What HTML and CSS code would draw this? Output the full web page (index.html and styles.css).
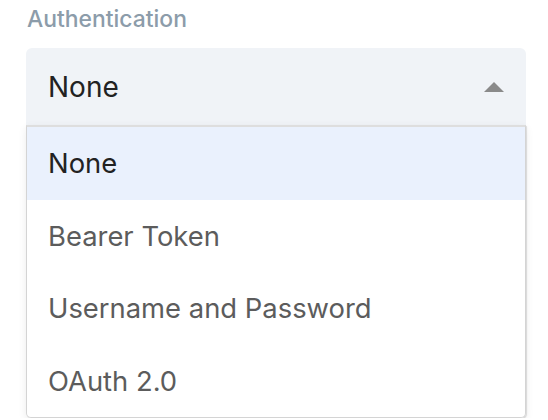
FILE: index.html
```html
<!DOCTYPE html>
<html>
<head>
<meta charset="utf-8">
<link rel="stylesheet" href="styles.css">
</head>
<body>
<div class="field">
  <div class="label">Authentication</div>
  <div class="select">
    <span class="value">None</span>
    <span class="caret"></span>
  </div>
  <ul class="menu">
    <li class="option selected">None</li>
    <li class="option">Bearer Token</li>
    <li class="option">Username and Password</li>
    <li class="option">OAuth 2.0</li>
  </ul>
</div>
</body>
</html>
```
FILE: styles.css
```css
html, body {
  margin: 0;
  padding: 0;
  background: #ffffff;
  font-family: Inter, "Liberation Sans", sans-serif;
}

.field {
  width: 500px;
  padding: 0 0 0 26px;
}

.label {
  font-size: 22.9px;
  font-weight: 500;
  line-height: 26px;
  padding-top: 6px;
  height: 42px;
  color: #8c9caa;
  padding-left: 1px;
}

.select {
  height: 77px;
  background: #f0f3f7;
  border-radius: 6px 6px 0 0;
  display: flex;
  align-items: center;
  justify-content: space-between;
  padding: 0 22px;
  box-sizing: border-box;
  font-size: 28px;
  color: #222222;
}

.caret {
  width: 0;
  height: 0;
  border-left: 10px solid transparent;
  border-right: 10px solid transparent;
  border-bottom: 10px solid #8a8a8a;
}

.menu {
  list-style: none;
  margin: 0;
  padding: 0;
  width: 498px;
  border: 1px solid #d4d4d4;
  border-top: 2px solid #dedede;
  border-radius: 0 0 5px 5px;
  box-shadow: 0 3px 8px rgba(0, 0, 0, 0.08), 1px 1px 1px rgba(0, 0, 0, 0.12);
  overflow: hidden;
}

.option {
  height: 72.5px;
  display: flex;
  align-items: center;
  padding-left: 21px;
  font-size: 27.4px;
  color: #5c5c5c;
}

.option.selected {
  background: #eaf1fd;
  color: #222222;
}
```
